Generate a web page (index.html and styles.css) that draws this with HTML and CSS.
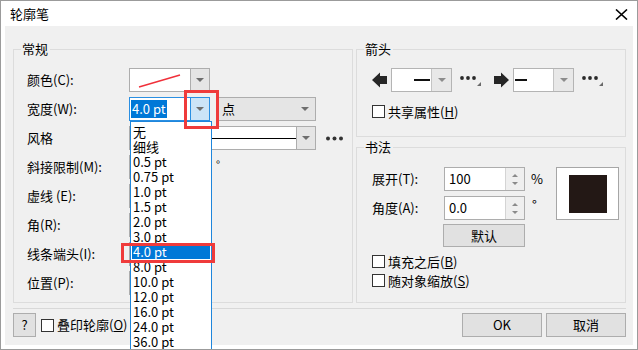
FILE: index.html
```html
<!DOCTYPE html>
<html lang="zh-CN">
<head>
<meta charset="utf-8">
<title>轮廓笔</title>
<link rel="stylesheet" href="styles.css">
</head>
<body>
<div class="window">
  <div class="titlebar">
    <span class="title">轮廓笔</span>
    <svg class="close" viewBox="0 0 13 11" aria-hidden="true"><path d="M1 0.5 L12 10.5 M12 0.5 L1 10.5" stroke="#000" stroke-width="1.6" fill="none"/></svg>
  </div>
  <div class="client">
    <div class="groups">
      <fieldset class="group general">
        <legend>常规</legend>
        <div class="rows">
          <div class="row">
            <span class="lbl">颜色(C):</span>
            <div class="combo w81">
              <div class="field"><svg class="swatch" viewBox="0 0 60 22"><path d="M9 18 L50 6" stroke="#f0303a" stroke-width="1.4"/></svg></div>
              <div class="btn"><i class="tri"></i></div>
            </div>
          </div>
          <div class="row">
            <span class="lbl">宽度(W):</span>
            <div class="combo w81 focus">
              <div class="field"><span class="sel">4.0 pt</span></div>
              <div class="btn"><i class="tri"></i></div>
            </div>
            <div class="combo units"><span class="utext">点</span><i class="tri"></i></div>
          </div>
          <div class="row">
            <span class="lbl">风格</span>
            <div class="combo style">
              <div class="field"><span class="stroke"></span></div>
              <div class="btn"><i class="tri"></i></div>
            </div>
            <svg class="dots3" viewBox="0 0 17 5"><circle cx="2" cy="2.5" r="2"/><circle cx="8.5" cy="2.5" r="2"/><circle cx="15" cy="2.5" r="2"/></svg>
          </div>
          <div class="row">
            <span class="lbl">斜接限制(M):</span>
            <div class="combo w81"><div class="field"></div></div>
            <span class="deg">°</span>
          </div>
          <div class="row">
            <span class="lbl">虚线 (E):</span>
            <div class="combo w81"><div class="field"></div></div>
          </div>
          <div class="row">
            <span class="lbl">角(R):</span>
            <div class="combo w81"><div class="field"></div></div>
          </div>
          <div class="row">
            <span class="lbl">线条端头(I):</span>
            <div class="combo w81"><div class="field"></div></div>
          </div>
          <div class="row">
            <span class="lbl">位置(P):</span>
            <div class="combo w81"><div class="field"></div></div>
          </div>
        </div>
      </fieldset>
      <div class="rightcol">
        <fieldset class="group arrows">
          <legend>箭头</legend>
          <div class="arrowrow">
            <svg class="arrow" viewBox="0 0 15 16"><polygon points="0,8 8,0.5 8,4 15,4 15,12 8,12 8,15.5" fill="#262626"/></svg>
            <div class="combo w61">
              <div class="field right"><span class="dash"></span></div>
              <div class="btn"><i class="tri light"></i></div>
            </div>
            <svg class="more" viewBox="0 0 22 14"><circle cx="2" cy="5" r="1.9" fill="#2a2a2a"/><circle cx="8" cy="5" r="1.9" fill="#2a2a2a"/><circle cx="14" cy="5" r="1.9" fill="#2a2a2a"/><polygon points="17,13 21,9 21,13" fill="#6a6a6a"/></svg>
            <svg class="arrow r" viewBox="0 0 15 16"><polygon points="15,8 7,0.5 7,4 0,4 0,12 7,12 7,15.5" fill="#262626"/></svg>
            <div class="combo w61">
              <div class="field"><span class="dash"></span></div>
              <div class="btn"><i class="tri light"></i></div>
            </div>
            <svg class="more" viewBox="0 0 22 14"><circle cx="2" cy="5" r="1.9" fill="#2a2a2a"/><circle cx="8" cy="5" r="1.9" fill="#2a2a2a"/><circle cx="14" cy="5" r="1.9" fill="#2a2a2a"/><polygon points="17,13 21,9 21,13" fill="#6a6a6a"/></svg>
          </div>
          <div class="check share"><span class="box"></span><span>共享属性(<u>H</u>)</span></div>
        </fieldset>
        <fieldset class="group callig">
          <legend>书法</legend>
          <div class="calwrap">
            <div class="calcol">
              <div class="row">
                <span class="clbl">展开(T):</span>
                <div class="spin">
                  <div class="field">100</div>
                  <div class="sbtn"><i class="up"></i><i class="down"></i></div>
                </div>
                <span class="unit">%</span>
              </div>
              <div class="row">
                <span class="clbl">角度(A):</span>
                <div class="spin">
                  <div class="field">0.0</div>
                  <div class="sbtn"><i class="up"></i><i class="down"></i></div>
                </div>
                <span class="unit deg2">°</span>
              </div>
              <div class="btnrow"><button class="pbtn deflt">默认</button></div>
              <div class="check c1"><span class="box"></span><span>填充之后(<u>B</u>)</span></div>
              <div class="check c2"><span class="box"></span><span>随对象缩放(<u>S</u>)</span></div>
            </div>
            <div class="preview"><div class="nib"></div></div>
          </div>
        </fieldset>
      </div>
    </div>
    <div class="sep"></div>
    <div class="footer">
      <button class="pbtn help">?</button>
      <div class="check overprint"><span class="box"></span><span>叠印轮廓(<u>O</u>)</span></div>
      <div class="spacer"></div>
      <button class="pbtn ok">OK</button>
      <button class="pbtn cancel">取消</button>
    </div>
  </div>

  <ul class="droplist">
    <li>无</li>
    <li>细线</li>
    <li>0.5 pt</li>
    <li>0.75 pt</li>
    <li>1.0 pt</li>
    <li>1.5 pt</li>
    <li>2.0 pt</li>
    <li>3.0 pt</li>
    <li class="selected">4.0 pt</li>
    <li>8.0 pt</li>
    <li>10.0 pt</li>
    <li>12.0 pt</li>
    <li>16.0 pt</li>
    <li>24.0 pt</li>
    <li>36.0 pt</li>
  </ul>
  <div class="mark mark-btn"></div>
  <div class="mark mark-item"></div>
</div>
</body>
</html>
```

FILE: styles.css
```css
* { box-sizing: border-box; }
html, body { margin: 0; padding: 0; background: #fff; }
body {
  font-family: "Noto Sans CJK SC", "Noto Sans", sans-serif;
  font-size: 13px;
  color: #000;
}
.window {
  position: relative;
  width: 638px;
  height: 350px;
  border: 1px solid #9b9b9b;
  background: #fff;
  display: flex;
  flex-direction: column;
  overflow: hidden;
}
.titlebar {
  height: 25px;
  flex: none;
  display: flex;
  align-items: center;
  justify-content: space-between;
  padding: 1px 9px 0 9px;
}
.title { line-height: 16px; }
.close { width: 13px; height: 11px; display: block; }

.client {
  margin: 0 4px 4px 4px;
  height: 319px;
  flex: none;
  background: #f0f0f0;
  display: flex;
  flex-direction: column;
}
.groups {
  display: flex;
  gap: 3px;
  padding: 15px 7px 0 8px;
  height: 277px;
  flex: none;
}
fieldset.group {
  margin: 0;
  padding: 0;
  border: 1px solid #dcdcdc;
  min-width: 0;
}
fieldset.group legend {
  margin-left: 7px;
  padding: 0 2px 0 1px;
  line-height: 16px;
  font-size: 13px;
}
.general { width: 340px; height: 262px; flex: none; }
.rightcol { width: 270px; display: flex; flex-direction: column; gap: 2px; }
.arrows { height: 96px; flex: none; }
.callig { height: 164px; flex: none; }

.rows {
  padding: 11px 0 0 13px;
  display: flex;
  flex-direction: column;
  gap: 5px;
}
.row { display: flex; align-items: center; height: 24px; }
.lbl { width: 102px; flex: none; white-space: nowrap; line-height: 16px; }

.combo {
  display: flex;
  height: 24px;
  border: 1px solid #adadad;
  background: #fff;
  flex: none;
}
.combo .field {
  flex: 1;
  display: flex;
  align-items: center;
  padding-left: 4px;
  line-height: 16px;
  overflow: hidden;
}
.combo .btn {
  width: 19px;
  flex: none;
  background: #e5e5e5;
  border-left: 1px solid #adadad;
  display: flex;
  align-items: center;
  justify-content: center;
}
.tri {
  display: block;
  width: 0;
  height: 0;
  border-left: 4px solid transparent;
  border-right: 4px solid transparent;
  border-top: 4px solid #6e6e6e;
}
.tri.light { border-top-color: #8c8c8c; }
.w81 { width: 81px; }
.w61 { width: 61px; }
.swatch { width: 60px; height: 22px; display: block; margin-left: -4px; }

.combo.focus { border-color: #2a8fe2; }
.combo.focus .btn { background: #cce4f7; border-left-color: #2a8fe2; }
.combo.focus .field { padding-left: 1px; }
.sel {
  background: #0078d7;
  color: #fff;
  line-height: 18px;
  padding: 0 1px;
}
.combo.units {
  width: 99px;
  margin-left: 7px;
  background: #e5e5e5;
  align-items: center;
  justify-content: space-between;
  padding: 0 6px 0 4px;
}
.utext { line-height: 16px; }
.combo.style { width: 187px; }
.combo.style .field { padding: 0 0 1px 0; }
.stroke { display: block; width: 100%; height: 1px; background: #000; margin-top: 1px; }
.dots3 { width: 17px; height: 5px; margin-left: 10px; fill: #333; display: block; }
.deg { margin-left: 6px; font-size: 11px; line-height: 10px; align-self: flex-start; margin-top: 4px; }

.arrowrow {
  display: flex;
  align-items: center;
  height: 24px;
  margin: 11px 0 0 15px;
}
.arrow { width: 15px; height: 16px; display: block; margin-right: 4px; flex: none; }
.arrow.r { margin-left: 12px; }
.field.right { justify-content: flex-end; padding: 0 1px 0 0; }
.dash { display: block; width: 16px; height: 2px; background: #111; }
.combo.w61 .field:not(.right) { padding-left: 1px; }
.combo.w61 .field:not(.right) .dash { width: 12px; }
.combo.w61 .btn { width: 20px; background: #e8e8e8; border-left-color: #c4c4c4; }
.combo.w61 { border-color: #b4b4b4; }
.more { width: 22px; height: 14px; display: block; margin-left: 8px; flex: none; }

.check { display: flex; align-items: center; height: 19px; line-height: 16px; }
.check .box {
  width: 13px;
  height: 13px;
  border: 1px solid #333;
  background: #fff;
  margin-right: 3px;
  flex: none;
}
.check u { text-underline-offset: 1px; }
.share { margin: 10px 0 0 15px; }

.calwrap { display: flex; padding: 12px 6px 0 15px; }
.calcol { width: 184px; flex: none; }
.calcol .row + .row { margin-top: 5px; }
.clbl { width: 72px; flex: none; line-height: 16px; white-space: nowrap; }
.spin {
  display: flex;
  width: 81px;
  height: 24px;
  border: 1px solid #adadad;
  background: #fff;
  flex: none;
}
.spin .field { flex: 1; display: flex; align-items: center; padding-left: 4px; line-height: 16px; }
.sbtn {
  width: 19px;
  flex: none;
  background: #efefef;
  border-left: 1px solid #d4d4d4;
  display: flex;
  flex-direction: column;
  align-items: center;
  justify-content: space-around;
  padding: 3px 0;
}
.sbtn .up, .sbtn .down { display: block; width: 0; height: 0; border-left: 3px solid transparent; border-right: 3px solid transparent; }
.sbtn .up { border-bottom: 3px solid #8a8a8a; }
.sbtn .down { border-top: 3px solid #8a8a8a; }
.unit { margin-left: 6px; line-height: 16px; }
.deg2 { align-self: flex-start; margin-top: 1px; margin-left: 7px; }
.btnrow { margin: 4px 0 0 71px; }
.pbtn {
  font: inherit;
  font-size: 13px;
  color: #000;
  background: #e1e1e1;
  border: 1px solid #adadad;
  height: 23px;
  padding: 0;
  line-height: 16px;
  display: block;
}
.deflt { width: 82px; }
.c1 { margin-top: 5px; }
.preview {
  width: 63px;
  height: 53px;
  margin-left: auto;
  border: 1px solid #a6a6a6;
  background: #fff;
  display: flex;
  align-items: center;
  justify-content: center;
}
.nib { width: 38px; height: 38px; background: #231815; }

.sep { height: 1px; background: #d8d8d8; margin: 5px 7px 0 8px; flex: none; }
.footer {
  display: flex;
  align-items: center;
  height: 24px;
  margin-top: 4px;
  padding: 0 7px 0 8px;
}
.help { width: 23px; height: 24px; }
.overprint { margin-left: 5px; }
.spacer { flex: 1; }
.ok, .cancel { width: 80px; height: 24px; }
.cancel { margin-left: 4px; }

.droplist {
  position: absolute;
  left: 129px;
  top: 120px;
  width: 82px;
  height: 229px;
  margin: 0;
  padding: 2px 1px 0 1px;
  list-style: none;
  border: 1px solid #1f86dc;
  background: #fff;
}
.droplist li {
  height: 15px;
  line-height: 15px;
  padding-left: 1px;
  white-space: nowrap;
}
.droplist li.selected { background: #0078d7; color: #fff; }

.mark { position: absolute; border: 3px solid #ef3b3b; }
.mark-btn { left: 183px; top: 89px; width: 35px; height: 39px; }
.mark-item { left: 120px; top: 242px; width: 94px; height: 20px; }
```
